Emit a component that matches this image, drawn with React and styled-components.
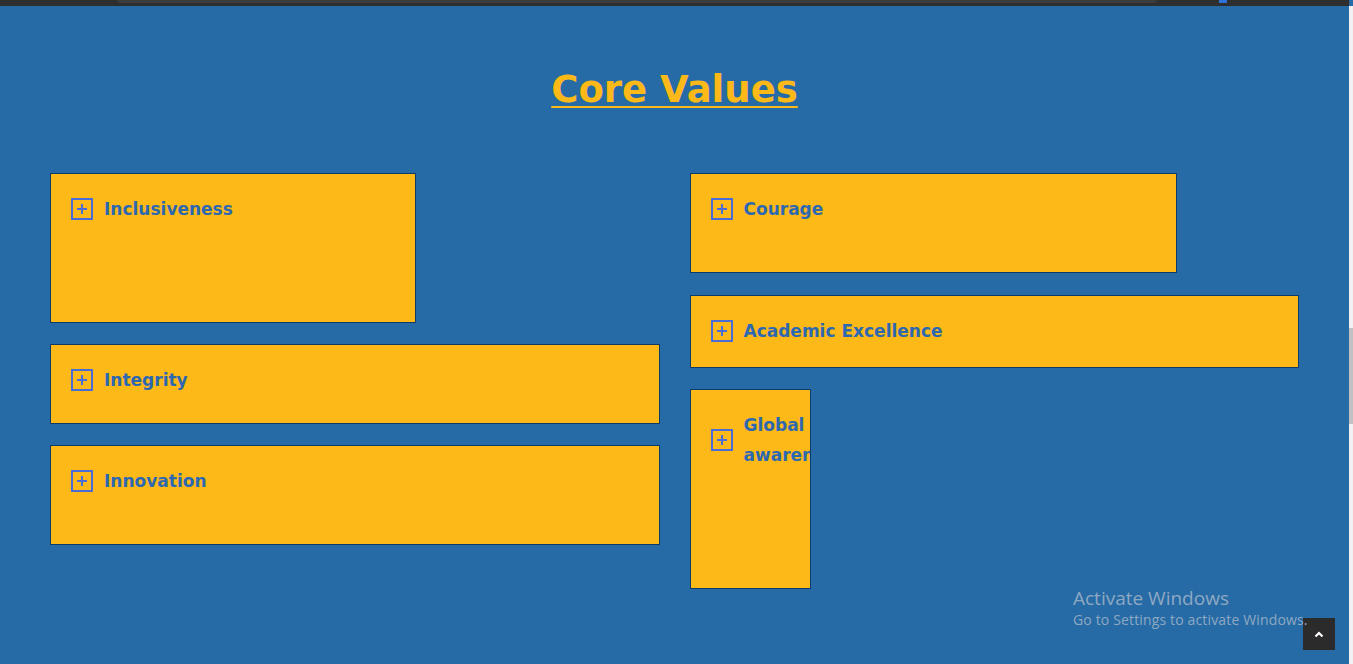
import styled, { createGlobalStyle } from 'styled-components';

const GlobalStyle = createGlobalStyle`
  html, body {
    margin: 0;
    padding: 0;
    background: #266ba6;
    overflow: hidden;
  }
`;

const Page = styled.div`
  display: flex;
  width: 1353px;
  height: 664px;
  background: #266ba6;
  position: relative;
  font-family: "Open Sans", "Liberation Sans", sans-serif;
`;

const Main = styled.div`
  flex: 1;
  display: flex;
  flex-direction: column;
`;

const TopBar = styled.div`
  height: 6px;
  background: #2e2e2e;
  display: flex;
  align-items: flex-start;
  padding: 0 0 0 117px;
  gap: 62px;
`;

const AddressBar = styled.div`
  width: 1040px;
  height: 3px;
  background: #3c3c3c;
  border-radius: 0 0 4px 4px;
`;

const BlueDot = styled.div`
  width: 8px;
  height: 3px;
  background: #2f72d6;
`;

const Section = styled.section`
  padding: 58px 50px 0;
`;

const Title = styled.h2`
  margin: 0 0 57px;
  text-align: center;
  font-family: "DejaVu Sans", "Open Sans", sans-serif;
  font-weight: 700;
  font-size: 37px;
  line-height: 52px;
  color: #fdb918;
  text-decoration: underline;
  text-decoration-thickness: 2px;
  text-underline-offset: 4px;
`;

const Columns = styled.div`
  display: grid;
  grid-template-columns: 1fr 1fr;
  column-gap: 30px;
  align-items: start;
`;

const Column = styled.div`
  display: flex;
  flex-direction: column;
  align-items: flex-start;
  gap: ${(p) => p.$gap || '21px'};
`;

const Card = styled.div`
  box-sizing: border-box;
  width: ${(p) => p.$width || '100%'};
  height: ${(p) => p.$height};
  background: #fdb918;
  border: 1px solid #0c3b6a;
  padding: 20px;
  overflow: hidden;
`;

const Head = styled.div`
  display: flex;
  align-items: center;
  gap: 11px;
`;

const PlusBox = styled.span`
  flex: none;
  box-sizing: border-box;
  width: 22px;
  height: 22px;
  border: 2px solid #4a6cd6;
  display: flex;
  align-items: center;
  justify-content: center;
`;

const Label = styled.span`
  font-family: "DejaVu Sans", "Open Sans", sans-serif;
  font-weight: 700;
  font-size: 17px;
  line-height: 30px;
  color: #2d68b0;
  white-space: normal;
`;

const Scrollbar = styled.div`
  width: 4px;
  display: flex;
  flex-direction: column;
  background: #f1f1f1;
  padding-top: 322px;
  margin-top: 6px;
`;

const Thumb = styled.div`
  height: 96px;
  background: #c1c1c1;
`;

const Watermark = styled.div`
  position: absolute;
  z-index: 2;
  left: 1073px;
  top: 586px;
  color: #8ea8c2;
  font-family: "Open Sans", "Liberation Sans", sans-serif;
  pointer-events: none;
`;

const WmTitle = styled.div`
  font-size: 19px;
  line-height: 24px;
`;

const WmSub = styled.div`
  font-size: 14px;
  line-height: 20px;
  letter-spacing: 0.15px;
`;

const TopButton = styled.button`
  position: absolute;
  z-index: 1;
  left: 1303px;
  top: 618px;
  width: 32px;
  height: 32px;
  border: none;
  padding: 0;
  background: #2b2b2b;
  display: flex;
  align-items: center;
  justify-content: center;
`;

const Plus = () => (
  <svg width="12" height="12" viewBox="0 0 12 12">
    <path d="M6 1v10M1 6h10" stroke="#4a6cd6" strokeWidth="2" />
  </svg>
);

const ValueCard = ({ label, width, height }) => (
  <Card $width={width} $height={height}>
    <Head>
      <PlusBox><Plus /></PlusBox>
      <Label>{label}</Label>
    </Head>
  </Card>
);

const left = [
  { label: 'Inclusiveness', width: '366px', height: '150px' },
  { label: 'Integrity', height: '80px' },
  { label: 'Innovation', height: '100px' },
];

const right = [
  { label: 'Courage', width: '487px', height: '100px' },
  { label: 'Academic Excellence', height: '73px' },
  { label: 'Global awareness', width: '121px', height: '200px' },
];

export default function App() {
  return (
    <Page>
      <GlobalStyle />
      <Main>
        <TopBar>
          <AddressBar />
          <BlueDot />
        </TopBar>
        <Section>
          <Title>Core Values</Title>
          <Columns>
            <Column>
              {left.map((v) => <ValueCard key={v.label} {...v} />)}
            </Column>
            <Column $gap="21.5px">
              {right.map((v) => <ValueCard key={v.label} {...v} />)}
            </Column>
          </Columns>
        </Section>
      </Main>
      <Scrollbar><Thumb /></Scrollbar>
      <Watermark>
        <WmTitle>Activate Windows</WmTitle>
        <WmSub>Go to Settings to activate Windows.</WmSub>
      </Watermark>
      <TopButton aria-label="Back to top">
        <svg width="10" height="7" viewBox="0 0 10 7">
          <path d="M1.5 5.5L5 2l3.5 3.5" stroke="#fff" strokeWidth="2.2" fill="none" />
        </svg>
      </TopButton>
    </Page>
  );
}
